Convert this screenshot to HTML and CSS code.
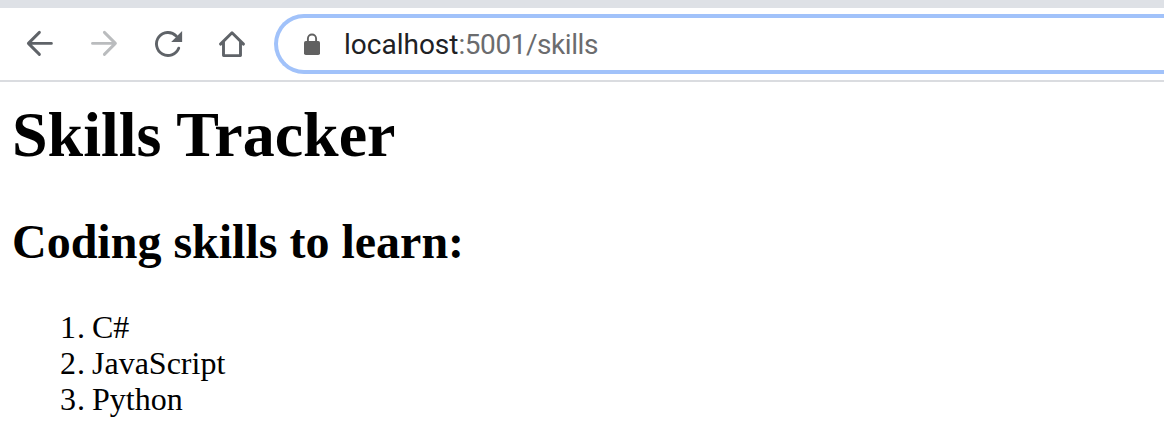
FILE: index.html
```html
<!DOCTYPE html>
<html lang="en">
<head>
<meta charset="utf-8">
<title>Skills Tracker</title>
<link rel="stylesheet" href="styles.css">
</head>
<body>
<header class="toolbar">
  <nav class="nav">
    <svg class="icon" viewBox="0 0 32 32"><path d="M27.4 15.4H4.5M15.4 4.4L4.4 15.4l11 11"/></svg>
    <svg class="icon icon-off" viewBox="0 0 32 32"><path d="M4.5 15.4h22.9M16.4 4.4l11 11l-11 11"/></svg>
    <svg class="icon" viewBox="0 0 32 32"><path d="M26.7 20.2A11.5 11.5 0 1 1 24.2 7.9"/><path class="solid" d="M30.1 3V14H19.2z"/></svg>
    <svg class="icon" viewBox="0 0 32 32"><path d="M4.5 16.1L16 4.8l11.5 11.3M7.5 14v13.6h17V14"/></svg>
  </nav>
  <div class="address">
    <svg class="lock" viewBox="0 0 16 22"><path class="shackle" d="M3.9 9V5.6a4.1 4.1 0 0 1 8.2 0v3.4"/><rect y="8" width="16" height="14" rx="1.8"/></svg>
    <span class="url"><span class="host">localhost</span><span class="path">:5001/skills</span></span>
  </div>
</header>
<main class="page">
  <h1>Skills Tracker</h1>
  <h2>Coding skills to learn:</h2>
  <ol class="skills">
    <li><span class="num">1.</span>C#</li>
    <li><span class="num">2.</span>JavaScript</li>
    <li><span class="num">3.</span>Python</li>
  </ol>
</main>
</body>
</html>
```

FILE: styles.css
```css
* { box-sizing: border-box; }
body {
  margin: 0;
  height: 446px;
  overflow: hidden;
  background: #fff;
  color: #000;
  font-family: "Liberation Serif", "Times New Roman", serif;
}
.toolbar {
  display: flex;
  height: 82px;
  padding: 6px 0 6px 24px;
  border-top: 8px solid #dee1e6;
  border-bottom: 2px solid #dadce0;
}
.nav {
  display: flex;
  align-items: center;
  gap: 32px;
  width: 250px;
}
.icon {
  width: 32px;
  height: 32px;
  flex: none;
  fill: none;
  stroke: #5f6368;
  stroke-width: 2.9;
  stroke-linecap: round;
  stroke-linejoin: round;
}
.icon-off { stroke: #babcbe; }
.icon .solid { fill: #5f6368; stroke: none; }
.address {
  display: flex;
  align-items: center;
  flex: 1;
  height: 60px;
  padding-left: 26px;
  border: 4px solid #a1c2fa;
  border-right: 0;
  border-radius: 30px 0 0 30px;
}
.lock {
  width: 16px;
  height: 22px;
  margin-right: 24px;
  fill: #616161;
}
.shackle { fill: none; stroke: #616161; stroke-width: 1.9; }
.url {
  padding-top: 2px;
  font: 28px/36px Roboto, sans-serif;
  color: #6b6c6e;
  white-space: nowrap;
}
.host { color: #202124; }
.path { letter-spacing: -0.45px; }
.page { padding: 17px 12px 0; }
h1 { margin: 0; font-size: 64px; line-height: 72px; }
h2 { margin: 43px 0 0; font-size: 48px; line-height: 56px; }
.skills {
  margin: 39px 0 0;
  padding: 0 0 0 48px;
  list-style: none;
  font-size: 32px;
  line-height: 36px;
}
.skills li { display: flex; }
.num { width: 32px; letter-spacing: 1px; }
```
